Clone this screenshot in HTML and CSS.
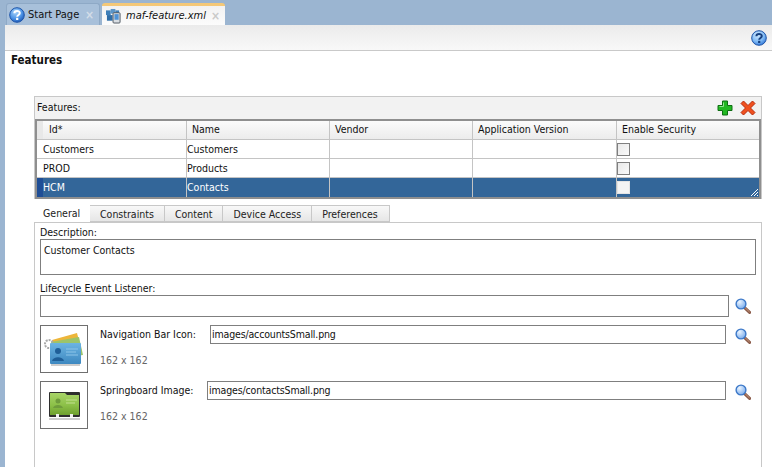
FILE: index.html
```html
<!DOCTYPE html>
<html lang="en">
<head>
<meta charset="utf-8">
<title>maf-feature.xml</title>
<link rel="stylesheet" href="styles.css">
</head>
<body>
<svg class="defs" width="0" height="0" aria-hidden="true">
  <defs>
    <radialGradient id="helpFill" cx="40%" cy="30%" r="75%">
      <stop offset="0" stop-color="#a9d4fb"/><stop offset="0.6" stop-color="#4c93e6"/><stop offset="1" stop-color="#1b57b5"/>
    </radialGradient>
    <radialGradient id="helpLight" cx="40%" cy="30%" r="75%">
      <stop offset="0" stop-color="#d4ecff"/><stop offset="0.6" stop-color="#7db8f4"/><stop offset="1" stop-color="#2f74d6"/>
    </radialGradient>
    <radialGradient id="lensFill" cx="35%" cy="30%" r="80%">
      <stop offset="0" stop-color="#eaf4ff"/><stop offset="1" stop-color="#6fa5ea"/>
    </radialGradient>
    <symbol id="help" viewBox="0 0 16 16">
      <circle cx="8" cy="8" r="7.3" fill="url(#helpFill)" stroke="#1f55a8"/>
      <path d="M5.4 6.2C5.4 3.2 10.8 3.2 10.8 6.1C10.8 8 8.2 7.9 8.2 9.7" fill="none" stroke="#fff" stroke-width="2"/>
      <rect x="7.1" y="10.8" width="2.2" height="2.2" fill="#fff"/>
    </symbol>
    <symbol id="help-dark" viewBox="0 0 16 16">
      <circle cx="8" cy="8" r="7.3" fill="url(#helpLight)" stroke="#1f55a8"/>
      <path d="M5.4 6.2C5.4 3.2 10.8 3.2 10.8 6.1C10.8 8 8.2 7.9 8.2 9.7" fill="none" stroke="#17407f" stroke-width="2"/>
      <rect x="7.1" y="10.8" width="2.2" height="2.2" fill="#17407f"/>
    </symbol>
    <symbol id="lens" viewBox="0 0 16 16">
      <path d="M9.8 9.8L14.6 14.4" stroke="#8a5a48" stroke-width="3" stroke-linecap="round"/>
      <path d="M10.2 9.8L14.6 14" stroke="#c99a80" stroke-width="1"/>
      <circle cx="6" cy="6" r="4.9" fill="url(#lensFill)" stroke="#3c78c8" stroke-width="1.4"/>
    </symbol>
  </defs>
</svg>

<div class="tabstrip">
  <div class="doc-tab doc-tab-off">
    <svg class="tab-help"><use href="#help"/></svg>
    <span class="doc-name">Start Page</span>
    <span class="doc-x">×</span>
  </div>
  <div class="doc-tab doc-tab-on">
    <svg class="tab-file" viewBox="0 0 16 16">
      <rect x="0" y="2" width="5" height="5" fill="#3f7fb8"/>
      <rect x="5" y="0.500" width="5" height="5" fill="#5b95c8"/>
      <rect x="1" y="7" width="6" height="6" fill="#2f6ea8"/>
      <rect x="10" y="2" width="4" height="4" fill="#3f7fb8"/>
      <rect x="7.500" y="4.500" width="7.500" height="11" rx="1" fill="#d9dee3" stroke="#4d5660"/>
      <rect x="9" y="6" width="4.500" height="6" fill="#4f93d6"/>
    </svg>
    <span class="doc-name doc-name-on">maf-feature.xml</span>
    <span class="doc-x">×</span>
  </div>
</div>

<main class="editor">
  <div class="toolbar"><svg class="toolbar-help"><use href="#help-dark"/></svg></div>
  <div class="content">
    <h1 class="page-title">Features</h1>

    <section class="features">
      <div class="features-head">
        <span>Features:</span>
        <span class="actions">
          <svg class="action" viewBox="0 0 16 16"><path d="M5.500 1H10.500V5.500H15V10.500H10.500V15H5.500V10.500H1V5.500H5.500Z" fill="#22b822" stroke="#0e6e12"/><path d="M6.500 2.500V6.500H2.500" fill="none" stroke="#8fe68f"/></svg>
          <svg class="action" viewBox="0 0 16 16"><path d="M1 3.500L3.500 1L8 5.500L12.500 1L15 3.500L10.500 8L15 12.500L12.500 15L8 10.500L3.500 15L1 12.500L5.500 8Z" fill="#f0501e" stroke="#b52a0c"/></svg>
        </span>
      </div>
      <div class="table">
        <div class="row row-head">
          <div class="gutter"></div>
          <div class="cell cell-id">Id*</div><div class="cell">Name</div><div class="cell">Vendor</div><div class="cell">Application Version</div><div class="cell">Enable Security</div>
        </div>
        <div class="row">
          <div class="gutter"></div>
          <div class="cell">Customers</div><div class="cell">Customers</div><div class="cell"></div><div class="cell"></div><div class="cell"><span class="check"></span></div>
        </div>
        <div class="row">
          <div class="gutter"></div>
          <div class="cell">PROD</div><div class="cell">Products</div><div class="cell"></div><div class="cell"></div><div class="cell"><span class="check"></span></div>
        </div>
        <div class="row row-selected">
          <div class="gutter"></div>
          <div class="cell">HCM</div><div class="cell">Contacts</div><div class="cell"></div><div class="cell"></div><div class="cell"><span class="check"></span></div>
        </div>
        <svg class="grip" viewBox="0 0 10 10"><path d="M9 2L2 9M9 5L5 9M9 8L8 9" stroke="#fff" stroke-width="1"/></svg>
      </div>
    </section>

    <nav class="tabs">
      <span class="tab tab-on">General</span>
      <span class="tab">Constraints</span>
      <span class="tab">Content</span>
      <span class="tab">Device Access</span>
      <span class="tab">Preferences</span>
    </nav>

    <section class="panel">
      <div class="label label-first">Description:</div>
      <div class="box box-desc">Customer Contacts</div>
      <div class="label label-life">Lifecycle Event Listener:</div>
      <div class="field-row">
        <div class="box box-life"></div>
        <svg class="lens"><use href="#lens"/></svg>
      </div>

      <div class="image-row image-row-nav">
        <div class="thumb">
          <svg viewBox="0 0 46 46" width="46" height="46">
            <defs>
              <linearGradient id="cardBlue" x1="0" y1="0" x2="0" y2="1"><stop offset="0" stop-color="#6cb4e2"/><stop offset="1" stop-color="#3d88c0"/></linearGradient>
              <linearGradient id="cardGreen" x1="0" y1="0" x2="0" y2="1"><stop offset="0" stop-color="#a8d468"/><stop offset="0.55" stop-color="#8cc048"/><stop offset="1" stop-color="#6ea02e"/></linearGradient>
            </defs>
            <path d="M11 14L36 7L41 26L16 30Z" fill="#edb63a"/>
            <path d="M10 16L38 11L42 29L14 33Z" fill="#9cc46a"/>
            <circle cx="8" cy="18" r="4" fill="none" stroke="#a8a8a8" stroke-width="2" stroke-dasharray="2 1"/>
            <rect x="9" y="17" width="31" height="21" rx="1" fill="url(#cardBlue)"/>
            <circle cx="17" cy="25" r="3" fill="#1f5f98"/>
            <path d="M11 35C12 30 22 30 23 35Z" fill="#1f5f98"/>
            <path d="M25 23H37M25 26H35M25 29H37" stroke="#8cc4e8"/>
            <rect x="10" y="38" width="29" height="2" fill="#9a9a9a" opacity=".5"/>
          </svg>
        </div>
        <div class="image-info">
          <div class="image-line">
            <span class="image-label image-label-nav">Navigation Bar Icon:</span>
            <div class="box box-path">images/accountsSmall.png</div>
            <svg class="lens"><use href="#lens"/></svg>
          </div>
          <div class="size">162 x 162</div>
        </div>
      </div>

      <div class="image-row">
        <div class="thumb">
          <svg viewBox="0 0 46 46" width="46" height="46">
            <rect x="8" y="10" width="31" height="25" rx="1" fill="#2e2e2e"/>
            <path d="M9 11H24L26 13H38V33H9Z" fill="url(#cardGreen)"/>
            <circle cx="17" cy="19" r="2.500" fill="#6f9c3c"/>
            <path d="M12 26C13 22 21 22 22 26Z" fill="#6f9c3c"/>
            <path d="M25 18H36M25 21H34" stroke="#c2e090"/>
            <rect x="15" y="32" width="3" height="3" fill="#eee"/>
            <rect x="29" y="32" width="3" height="3" fill="#eee"/>
            <rect x="8" y="36" width="31" height="2" fill="#9a9a9a" opacity=".5"/>
          </svg>
        </div>
        <div class="image-info">
          <div class="image-line">
            <span class="image-label image-label-spring">Springboard Image:</span>
            <div class="box box-path">images/contactsSmall.png</div>
            <svg class="lens"><use href="#lens"/></svg>
          </div>
          <div class="size">162 x 162</div>
        </div>
      </div>
    </section>
  </div>
</main>
</body>
</html>
```

FILE: styles.css
```css
* { box-sizing: border-box; }

html, body {
  margin: 0;
  height: 100%;
}

body {
  width: 772px;
  height: 467px;
  overflow: hidden;
  display: flex;
  flex-direction: column;
  background: #9bb5d1;
  font-family: "DejaVu Sans Condensed", "DejaVu Sans", sans-serif;
  font-stretch: condensed;
  font-size: 10.5px;
  line-height: 14px;
  color: #111;
}

.defs { position: absolute; }

.tabstrip {
  flex: none;
  height: 25px;
  padding: 3px 0 0 6px;
  display: flex;
  gap: 2px;
}

.doc-tab {
  height: 22px;
  display: flex;
  align-items: center;
  border-radius: 3px 3px 0 0;
}

.doc-tab-off {
  width: 94px;
  padding-left: 2px;
  background: #a8c0da;
  border: 1px solid #8ea9c6;
  border-bottom: 0;
}

.doc-tab-on {
  width: 123px;
  padding-left: 4px;
  background: linear-gradient(#f2f2f2, #fcfcfc);
  border-top: 3px solid #f4c878;
}

.tab-help { width: 16px; height: 16px; flex: none; }
.tab-file { width: 15px; height: 16px; flex: none; }

.doc-name { margin-left: 3px; color: #111; font-size: 11px; white-space: nowrap; }
.doc-name-on { font-style: italic; margin-left: 5px; }

.doc-x {
  margin-left: auto;
  margin-right: 5px;
  color: #d3dde8;
  font-weight: bold;
  font-size: 12px;
}

.doc-tab-on .doc-x { color: #c9c9c9; }

.editor {
  flex: 1;
  margin-left: 5px;
  background: #fff;
  display: flex;
  flex-direction: column;
  min-height: 0;
}

.toolbar {
  flex: none;
  height: 26px;
  padding-right: 5px;
  display: flex;
  justify-content: flex-end;
  align-items: center;
  background: linear-gradient(#ebebeb, #f8f8f8);
  border-bottom: 1px solid #c9c9c9;
}

.toolbar-help { width: 16px; height: 16px; margin-top: 1px; }

.content {
  flex: 1;
  display: flex;
  flex-direction: column;
  min-height: 0;
}

.page-title {
  margin: 2px 0 0 6px;
  height: 15px;
  font-size: 11.5px;
  line-height: 15px;
  font-weight: bold;
}

.features {
  margin: 28px 10px 0 29px;
  height: 103px;
  background: #f2f2f2;
  border: 1px solid #c8c8c8;
  border-bottom: 0;
}

.features-head {
  height: 22px;
  padding: 0 5px 0 2px;
  display: flex;
  align-items: center;
  justify-content: space-between;
}

.features-head > span:first-child { padding-bottom: 2px; }

.actions { display: flex; gap: 7px; }
.action { width: 16px; height: 16px; display: block; }

.table {
  position: relative;
  border: 2px solid #8f8f8f;
  background: #fff;
  height: 80px;
}

.row {
  display: grid;
  grid-template-columns: 6px 144px 143px 143px 144px 1fr;
  height: 19px;
  border-bottom: 1px solid #c4c4c4;
}

.row:last-of-type { border-bottom: 0; }

.row-head {
  background: linear-gradient(#fbfbfb, #ececec);
}

.gutter { background: #fff; }
.row-head .gutter { background: #e8e8e8; }

.cell {
  line-height: 18px;
  white-space: nowrap;
  border-right: 1px solid #c4c4c4;
}

.row-head .cell { padding-left: 5px; line-height: 16px; }
.row-head .cell-id { padding-left: 6px; }

.cell:last-child { border-right: 0; }

.row-selected { background: #336699; color: #fff; }
.row-selected .gutter { background: #1f4e96; }

.check {
  display: block;
  width: 13px;
  height: 13px;
  margin-top: 3px;
  background: linear-gradient(135deg, #e8e8e8, #fafafa);
  border: 1px solid #7f7f7f;
}

.row-selected .check { border-color: #e4e4e4; background: #f4f4f4; }

.grip {
  position: absolute;
  right: 0;
  bottom: 0;
  width: 10px;
  height: 10px;
}

.tabs {
  margin: 6px 0 0 29px;
  display: flex;
  height: 17px;
}

.tab {
  padding: 0 10px;
  line-height: 17px;
  white-space: nowrap;
  background: linear-gradient(#f8f8f8, #e6e6e6);
  border: 1px solid #c8c8c8;
  border-left: 0;
  color: #222;
}

.tab:last-child { padding-right: 11px; }

.tab-on {
  width: 56px;
  padding: 0 9px;
  background: #fff;
  border: 0;
}

.panel {
  flex: 1;
  margin: 0 10px 0 29px;
  padding: 0 5px;
  border-left: 1px solid #c8c8c8;
  border-right: 1px solid #c8c8c8;
  border-top: 1px solid #c8c8c8;
  min-height: 0;
}

.label { height: 14px; line-height: 15px; }
.label-first { margin-top: 2px; }
.label-life { margin-top: 6px; }

.box {
  border: 1px solid #7f7f7f;
  background: #fff;
  white-space: nowrap;
}

.box-desc {
  height: 36px;
  padding: 3px 3px;
}

.field-row {
  display: flex;
  align-items: center;
  gap: 6px;
}

.box-life { width: 689px; height: 22px; }

.lens { width: 16px; height: 16px; flex: none; }

.image-row {
  display: flex;
  margin-top: 8px;
  height: 48px;
}

.thumb {
  flex: none;
  width: 48px;
  height: 48px;
  border: 1px solid #6f6f6f;
}

.thumb svg { display: block; }

.image-info {
  flex: 1;
  padding-left: 12px;
  display: flex;
  flex-direction: column;
}

.image-line {
  display: flex;
  align-items: flex-end;
}

.image-label { flex: none; color: #111; align-self: center; padding-bottom: 2px; }
.image-label-nav { width: 110px; }
.image-label-spring { width: 107px; }

.box-path {
  flex: none;
  height: 19px;
  line-height: 17px;
  padding-left: 1px;
  letter-spacing: -0.15px;
}

.image-row-nav .box-path { width: 516px; }
.image-row:not(.image-row-nav) .box-path { width: 519px; }

.image-line .lens { margin-left: 9px; }

.size {
  margin-top: 9px;
  color: #666;
}
```
